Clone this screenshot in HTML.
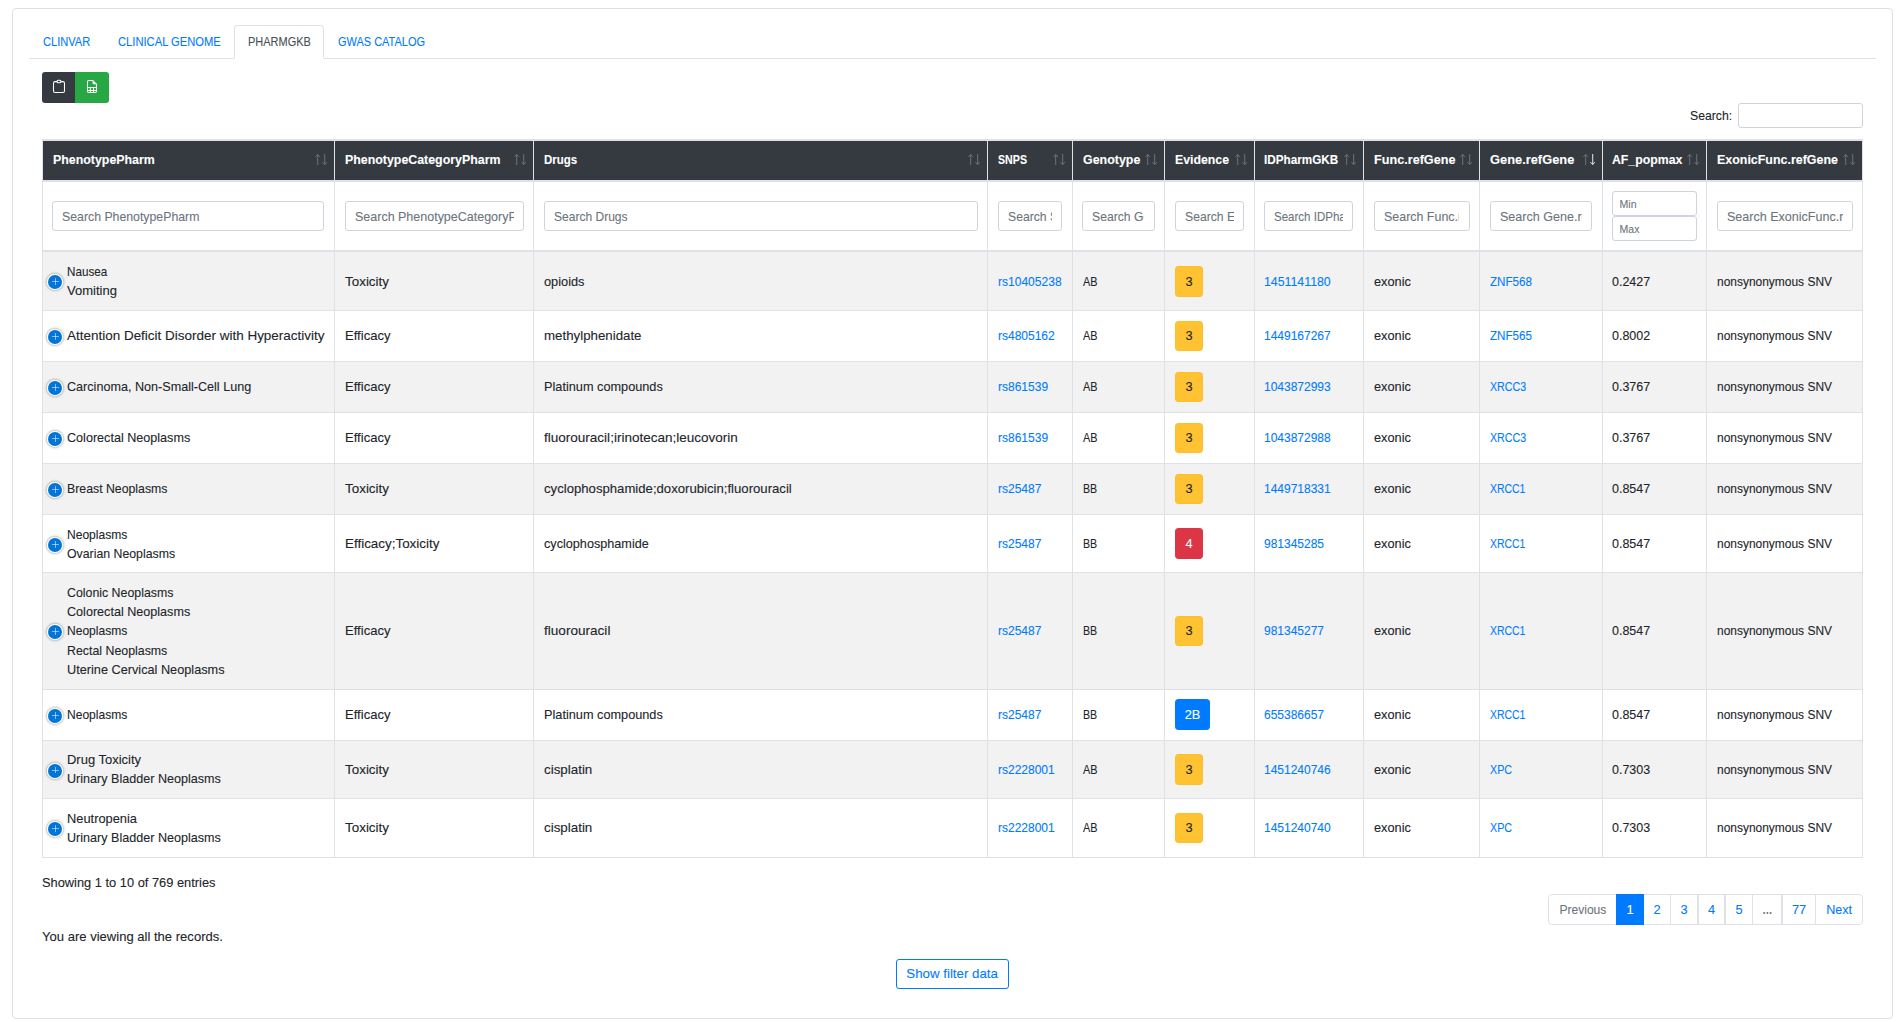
<!DOCTYPE html><html><head><meta charset="utf-8"><title>PharmGKB</title><style>
*{box-sizing:border-box}
html,body{margin:0;padding:0;background:#fff}
body{width:1896px;height:1022px;overflow:hidden;position:relative;font-family:"Liberation Sans",sans-serif;font-size:12.8px;line-height:19.2px;color:#212529;-webkit-text-stroke:.1px currentColor}
.card{position:absolute;left:12px;top:8px;width:1881px;height:1011px;border:1px solid #dfdfdf;border-radius:4px}
.tabline{position:absolute;left:29px;top:58px;width:1847px;height:1px;background:#dee2e6}
.tab-active{position:absolute;left:234px;top:25px;width:90px;height:34px;border:1px solid #dee2e6;border-bottom-color:#fff;border-radius:4px 4px 0 0;background:#fff}
.tab{position:absolute;top:32px;white-space:nowrap}
.btn-dark,.btn-green{position:absolute;top:72px;height:31px}
.btn-dark svg,.btn-green svg{display:block}
.btn-dark{left:42px;width:33px;background:#343a40;border-radius:3px 0 0 3px}
.btn-green{left:75px;width:34px;background:#28a745;border-radius:0 3px 3px 0}
.slabel{position:absolute;left:1690px;top:106px;white-space:nowrap}
.sinput{position:absolute;left:1738px;top:103px;width:125px;height:25px;border:1px solid #ced4da;border-radius:3px;background:#fff}
table.dt{position:absolute;left:42px;top:139px;width:1821px;table-layout:fixed;border-collapse:separate;border-spacing:0;border:1px solid #dee2e6;border-right:0}
.dt th,.dt td{border-right:1px solid #dee2e6;padding:0 9.6px;vertical-align:middle;text-align:left;white-space:nowrap;font-weight:400}
.dt .hr th{background:#343a40;color:#fff;height:42px;padding-bottom:2.4px;border-top:1px solid #dee2e6;border-bottom:2px solid #dee2e6;border-right-color:#dee2e6;font-weight:700;position:relative}
.dt .hr th:first-child{}
.arrows{position:absolute;right:7px;top:13.1px;display:flex;gap:.8px}
.ar{display:block}
.dt .fr th{height:70px;border-bottom:2px solid #dee2e6;background:#fff}
.inp{height:30px;border:1px solid #ced4da;border-radius:3px;padding:0 9px;color:#6c757d;overflow:hidden;display:flex;align-items:center;background:#fff}
.inp .clip{overflow:hidden;white-space:nowrap;width:100%;position:relative;top:.75px}
.inp.sm{height:24.6px;font-size:10.5px;padding:1.5px 6px 0 7px}
.mm{display:flex;flex-direction:column;gap:.4px;margin-right:-.6px;margin-left:-1px}
.dt tbody td{border-top:1px solid #dee2e6}
.dt tbody tr:first-child td{border-top:0}
.dt tr.odd td{background:#f2f2f2}
.dt td.c1{padding-left:24.2px;position:relative}
.plus{position:absolute;box-sizing:content-box;left:5px;top:50%;margin-top:-6px;width:14px;height:14px;border-radius:50%;background:#0275d8;box-shadow:0 0 0 1.3px #fff,0 0 2.6px 1.3px rgba(68,68,68,.7)}
.plus:before,.plus:after{content:"";position:absolute;background:rgba(255,255,255,.52)}
.plus:before{left:3.95px;top:6px;width:6.9px;height:1px}
.plus:after{left:6.9px;top:3.05px;width:1px;height:6.9px}
.lk{color:#007bff}
.dt td.ev{position:relative}
.badge{position:absolute;left:10px;text-align:center;border-radius:3.2px;border:1px solid transparent}
.bw{background:#ffc233;border-color:#ffbf26;color:#212529}
.bd{background:#dc3545;border-color:#dc3545;color:#fff}
.bp{background:#007bff;border-color:#007bff;color:#fff}
.dt tr.r1 td{padding-top:2px}
.dt tr.r1 td.c1{padding-top:0}
.info{position:absolute;left:42px;white-space:nowrap}
.pager{position:absolute;left:1548px;top:894px;height:31px}
.pl{position:absolute;top:0;height:31px;border:1px solid #dee2e6;background:#fff;text-align:center;line-height:29px}
.pl.act{background:#007bff;border-color:#007bff;z-index:2}
.pl.first{border-radius:4px 0 0 4px}
.pl.last{border-radius:0 4px 4px 0}
.sfd{position:absolute;left:896px;top:959px;width:113px;height:30px;border:1px solid #007bff;border-radius:3px;color:#007bff;text-align:center;line-height:28px;white-space:nowrap}

</style></head><body>
<div class="card"></div>
<div class="tabline"></div>
<div class="tab-active"></div>
<div class="tab" style="left:42.7px;color:#007bff"><span style="display:inline-block;transform:scaleX(0.8674);transform-origin:0 50%;">CLINVAR</span></div>
<div class="tab" style="left:117.5px;color:#007bff"><span style="display:inline-block;transform:scaleX(0.8743);transform-origin:0 50%;">CLINICAL GENOME</span></div>
<div class="tab" style="left:248px;color:#495057"><span style="display:inline-block;transform:scaleX(0.8587);transform-origin:0 50%;">PHARMGKB</span></div>
<div class="tab" style="left:338.4px;color:#007bff"><span style="display:inline-block;transform:scaleX(0.8577);transform-origin:0 50%;">GWAS CATALOG</span></div>
<div class="btn-dark"><svg width="33" height="31" viewBox="0 0 33 31"><rect x="11.5" y="9.6" width="11" height="10.9" rx="1.6" fill="none" stroke="#fff" stroke-width="1.05"/><rect x="15" y="8.3" width="4" height="2.4" rx="1.1" fill="#343a40" stroke="#fff" stroke-width="1.05"/></svg></div>
<div class="btn-green"><svg width="34" height="31" viewBox="0 0 34 31"><path d="M12.5 9.7a1.2 1.2 0 0 1 1.2-1.2H17.7L21.5 12.3V19.3a1.2 1.2 0 0 1-1.2 1.2H13.7a1.2 1.2 0 0 1-1.2-1.2z" fill="none" stroke="#fff" stroke-width="1.05"/><path d="M17.6 8.5V11.2a1.1 1.1 0 0 0 1.1 1.1H21.5z" fill="#fff"/><path d="M12.5 15.5H21.5M12.5 18.5H21.5M15.3 15.5V20.5M18.5 15.5V20.5" fill="none" stroke="#fff" stroke-width="1.05"/></svg></div>
<div class="slabel"><span style="display:inline-block;transform:scaleX(0.9567);transform-origin:0 50%;">Search:</span></div><div class="sinput"></div>
<table class="dt"><colgroup>
<col style="width:292px">
<col style="width:199px">
<col style="width:454px">
<col style="width:85px">
<col style="width:92px">
<col style="width:90px">
<col style="width:109px">
<col style="width:116px">
<col style="width:123px">
<col style="width:104px">
<col style="width:156px">
</colgroup><thead><tr class="hr">
<th><span style="display:inline-block;transform:scaleX(0.9672);transform-origin:0 50%;">PhenotypePharm</span><span class="arrows"><svg class="ar" style="opacity:.3" width="5.4" height="11" viewBox="0 0 5.4 11"><path d="M2.7 .4V11M.4 2.9L2.7 .5L5 2.9" fill="none" stroke="#fff" stroke-width=".95"/></svg><svg class="ar" style="opacity:.3" width="5.4" height="11" viewBox="0 0 5.4 11"><path d="M2.7 0V10.6M.4 8.1L2.7 10.5L5 8.1" fill="none" stroke="#fff" stroke-width=".95"/></svg></span></th>
<th><span style="display:inline-block;transform:scaleX(0.9675);transform-origin:0 50%;">PhenotypeCategoryPharm</span><span class="arrows"><svg class="ar" style="opacity:.3" width="5.4" height="11" viewBox="0 0 5.4 11"><path d="M2.7 .4V11M.4 2.9L2.7 .5L5 2.9" fill="none" stroke="#fff" stroke-width=".95"/></svg><svg class="ar" style="opacity:.3" width="5.4" height="11" viewBox="0 0 5.4 11"><path d="M2.7 0V10.6M.4 8.1L2.7 10.5L5 8.1" fill="none" stroke="#fff" stroke-width=".95"/></svg></span></th>
<th><span style="display:inline-block;transform:scaleX(0.8977);transform-origin:0 50%;">Drugs</span><span class="arrows"><svg class="ar" style="opacity:.3" width="5.4" height="11" viewBox="0 0 5.4 11"><path d="M2.7 .4V11M.4 2.9L2.7 .5L5 2.9" fill="none" stroke="#fff" stroke-width=".95"/></svg><svg class="ar" style="opacity:.3" width="5.4" height="11" viewBox="0 0 5.4 11"><path d="M2.7 0V10.6M.4 8.1L2.7 10.5L5 8.1" fill="none" stroke="#fff" stroke-width=".95"/></svg></span></th>
<th><span style="display:inline-block;transform:scaleX(0.8319);transform-origin:0 50%;">SNPS</span><span class="arrows"><svg class="ar" style="opacity:.3" width="5.4" height="11" viewBox="0 0 5.4 11"><path d="M2.7 .4V11M.4 2.9L2.7 .5L5 2.9" fill="none" stroke="#fff" stroke-width=".95"/></svg><svg class="ar" style="opacity:.3" width="5.4" height="11" viewBox="0 0 5.4 11"><path d="M2.7 0V10.6M.4 8.1L2.7 10.5L5 8.1" fill="none" stroke="#fff" stroke-width=".95"/></svg></span></th>
<th><span style="display:inline-block;transform:scaleX(0.9707);transform-origin:0 50%;">Genotype</span><span class="arrows"><svg class="ar" style="opacity:.3" width="5.4" height="11" viewBox="0 0 5.4 11"><path d="M2.7 .4V11M.4 2.9L2.7 .5L5 2.9" fill="none" stroke="#fff" stroke-width=".95"/></svg><svg class="ar" style="opacity:.3" width="5.4" height="11" viewBox="0 0 5.4 11"><path d="M2.7 0V10.6M.4 8.1L2.7 10.5L5 8.1" fill="none" stroke="#fff" stroke-width=".95"/></svg></span></th>
<th><span style="display:inline-block;transform:scaleX(0.9608);transform-origin:0 50%;">Evidence</span><span class="arrows"><svg class="ar" style="opacity:.3" width="5.4" height="11" viewBox="0 0 5.4 11"><path d="M2.7 .4V11M.4 2.9L2.7 .5L5 2.9" fill="none" stroke="#fff" stroke-width=".95"/></svg><svg class="ar" style="opacity:.3" width="5.4" height="11" viewBox="0 0 5.4 11"><path d="M2.7 0V10.6M.4 8.1L2.7 10.5L5 8.1" fill="none" stroke="#fff" stroke-width=".95"/></svg></span></th>
<th><span style="display:inline-block;transform:scaleX(0.9153);transform-origin:0 50%;position:relative;left:-1px;">IDPharmGKB</span><span class="arrows"><svg class="ar" style="opacity:.3" width="5.4" height="11" viewBox="0 0 5.4 11"><path d="M2.7 .4V11M.4 2.9L2.7 .5L5 2.9" fill="none" stroke="#fff" stroke-width=".95"/></svg><svg class="ar" style="opacity:.3" width="5.4" height="11" viewBox="0 0 5.4 11"><path d="M2.7 0V10.6M.4 8.1L2.7 10.5L5 8.1" fill="none" stroke="#fff" stroke-width=".95"/></svg></span></th>
<th><span style="display:inline-block;transform:scaleX(0.9879);transform-origin:0 50%;">Func.refGene</span><span class="arrows"><svg class="ar" style="opacity:.3" width="5.4" height="11" viewBox="0 0 5.4 11"><path d="M2.7 .4V11M.4 2.9L2.7 .5L5 2.9" fill="none" stroke="#fff" stroke-width=".95"/></svg><svg class="ar" style="opacity:.3" width="5.4" height="11" viewBox="0 0 5.4 11"><path d="M2.7 0V10.6M.4 8.1L2.7 10.5L5 8.1" fill="none" stroke="#fff" stroke-width=".95"/></svg></span></th>
<th><span style="display:inline-block;transform:scaleX(1.0043);transform-origin:0 50%;">Gene.refGene</span><span class="arrows"><svg class="ar" style="opacity:.3" width="5.4" height="11" viewBox="0 0 5.4 11"><path d="M2.7 .4V11M.4 2.9L2.7 .5L5 2.9" fill="none" stroke="#fff" stroke-width=".95"/></svg><svg class="ar" style="opacity:.92" width="5.4" height="11" viewBox="0 0 5.4 11"><path d="M2.7 0V10.6M.4 8.1L2.7 10.5L5 8.1" fill="none" stroke="#fff" stroke-width=".95"/></svg></span></th>
<th><span style="display:inline-block;transform:scaleX(0.9597);transform-origin:0 50%;position:relative;left:-1px;">AF_popmax</span><span class="arrows"><svg class="ar" style="opacity:.3" width="5.4" height="11" viewBox="0 0 5.4 11"><path d="M2.7 .4V11M.4 2.9L2.7 .5L5 2.9" fill="none" stroke="#fff" stroke-width=".95"/></svg><svg class="ar" style="opacity:.3" width="5.4" height="11" viewBox="0 0 5.4 11"><path d="M2.7 0V10.6M.4 8.1L2.7 10.5L5 8.1" fill="none" stroke="#fff" stroke-width=".95"/></svg></span></th>
<th><span style="display:inline-block;transform:scaleX(0.9715);transform-origin:0 50%;">ExonicFunc.refGene</span><span class="arrows"><svg class="ar" style="opacity:.3" width="5.4" height="11" viewBox="0 0 5.4 11"><path d="M2.7 .4V11M.4 2.9L2.7 .5L5 2.9" fill="none" stroke="#fff" stroke-width=".95"/></svg><svg class="ar" style="opacity:.3" width="5.4" height="11" viewBox="0 0 5.4 11"><path d="M2.7 0V10.6M.4 8.1L2.7 10.5L5 8.1" fill="none" stroke="#fff" stroke-width=".95"/></svg></span></th>
</tr><tr class="fr">
<th><div class="inp" style="margin-left:-.7px"><div class="clip"><span style="display:inline-block;transform:scaleX(0.961);transform-origin:0 50%">Search PhenotypePharm</span></div></div></th>
<th><div class="inp" style="margin-right:-.7px"><div class="clip"><span style="display:inline-block;transform:scaleX(0.976);transform-origin:0 50%">Search PhenotypeCategoryPharm</span></div></div></th>
<th><div class="inp" style="margin-right:-.7px"><div class="clip"><span style="display:inline-block;transform:scaleX(0.94);transform-origin:0 50%">Search Drugs</span></div></div></th>
<th><div class="inp"><div class="clip"><span style="display:inline-block;transform:scaleX(0.952);transform-origin:0 50%">Search SNPS</span></div></div></th>
<th><div class="inp" style="margin:0 -.7px;padding-right:10.4px"><div class="clip"><span style="display:inline-block;transform:scaleX(0.952);transform-origin:0 50%">Search Genotype</span></div></div></th>
<th><div class="inp"><div class="clip"><span style="display:inline-block;transform:scaleX(0.952);transform-origin:0 50%">Search Evidence</span></div></div></th>
<th><div class="inp" style="margin-left:-.7px"><div class="clip"><span style="display:inline-block;transform:scaleX(0.9);transform-origin:0 50%">Search IDPharmGKB</span></div></div></th>
<th><div class="inp" style="margin-right:-.7px;padding-right:9.7px"><div class="clip"><span style="display:inline-block;transform:scaleX(0.972);transform-origin:0 50%">Search Func.refGene</span></div></div></th>
<th><div class="inp"><div class="clip"><span style="display:inline-block;transform:scaleX(0.98);transform-origin:0 50%">Search Gene.refGene</span></div></div></th>
<th><div class="mm"><div class="inp sm"><span>Min</span></div><div class="inp sm"><span>Max</span></div></div></th>
<th><div class="inp" style="margin-right:-.7px"><div class="clip"><span style="display:inline-block;transform:scaleX(0.98);transform-origin:0 50%">Search ExonicFunc.refGene</span></div></div></th>
</tr></thead><tbody>
<tr class="odd r1" style="height:58px">
<td class="c1"><i class="plus" style="margin-top:-5.6px"></i><span style="display:inline-block;transform:scaleX(0.9114);transform-origin:0 50%;">Nausea</span><br><span style="display:inline-block;transform:scaleX(1.0164);transform-origin:0 50%;">Vomiting</span></td>
<td><span style="display:inline-block;transform:scaleX(1.0488);transform-origin:0 50%;">Toxicity</span></td>
<td><span style="display:inline-block;transform:scaleX(0.9985);transform-origin:0 50%;">opioids</span></td>
<td><span class="lk" style="display:inline-block;transform:scaleX(0.9407);transform-origin:0 50%;">rs10405238</span></td>
<td><span style="display:inline-block;transform:scaleX(0.8490);transform-origin:0 50%;">AB</span></td>
<td class="ev"><span class="badge bw" style="top:14px;height:31px;line-height:29px;width:28px">3</span></td>
<td><span class="lk" style="display:inline-block;transform:scaleX(0.9627);transform-origin:0 50%;position:relative;left:-1px;">1451141180</span></td>
<td><span style="display:inline-block;transform:scaleX(0.9973);transform-origin:0 50%;">exonic</span></td>
<td><span class="lk" style="display:inline-block;transform:scaleX(0.9084);transform-origin:0 50%;">ZNF568</span></td>
<td><span style="display:inline-block;transform:scaleX(0.9760);transform-origin:0 50%;position:relative;left:-1px;">0.2427</span></td>
<td><span style="display:inline-block;transform:scaleX(0.9345);transform-origin:0 50%;">nonsynonymous SNV</span></td>
</tr>
<tr class="even" style="height:51px">
<td class="c1"><i class="plus"></i><span style="display:inline-block;transform:scaleX(1.0525);transform-origin:0 50%;">Attention Deficit Disorder with Hyperactivity</span></td>
<td><span style="display:inline-block;transform:scaleX(1.0207);transform-origin:0 50%;">Efficacy</span></td>
<td><span style="display:inline-block;transform:scaleX(1.0381);transform-origin:0 50%;">methylphenidate</span></td>
<td><span class="lk" style="display:inline-block;transform:scaleX(0.9374);transform-origin:0 50%;">rs4805162</span></td>
<td><span style="display:inline-block;transform:scaleX(0.8490);transform-origin:0 50%;">AB</span></td>
<td class="ev"><span class="badge bw" style="top:10px;height:30px;line-height:28px;width:28px">3</span></td>
<td><span class="lk" style="display:inline-block;transform:scaleX(0.9372);transform-origin:0 50%;position:relative;left:-1px;">1449167267</span></td>
<td><span style="display:inline-block;transform:scaleX(0.9973);transform-origin:0 50%;">exonic</span></td>
<td><span class="lk" style="display:inline-block;transform:scaleX(0.9084);transform-origin:0 50%;">ZNF565</span></td>
<td><span style="display:inline-block;transform:scaleX(0.9760);transform-origin:0 50%;position:relative;left:-1px;">0.8002</span></td>
<td><span style="display:inline-block;transform:scaleX(0.9345);transform-origin:0 50%;">nonsynonymous SNV</span></td>
</tr>
<tr class="odd" style="height:51px">
<td class="c1"><i class="plus"></i><span style="display:inline-block;transform:scaleX(0.9847);transform-origin:0 50%;">Carcinoma, Non-Small-Cell Lung</span></td>
<td><span style="display:inline-block;transform:scaleX(1.0207);transform-origin:0 50%;">Efficacy</span></td>
<td><span style="display:inline-block;transform:scaleX(0.9940);transform-origin:0 50%;">Platinum compounds</span></td>
<td><span class="lk" style="display:inline-block;transform:scaleX(0.9386);transform-origin:0 50%;">rs861539</span></td>
<td><span style="display:inline-block;transform:scaleX(0.8490);transform-origin:0 50%;">AB</span></td>
<td class="ev"><span class="badge bw" style="top:10px;height:30px;line-height:28px;width:28px">3</span></td>
<td><span class="lk" style="display:inline-block;transform:scaleX(0.9372);transform-origin:0 50%;position:relative;left:-1px;">1043872993</span></td>
<td><span style="display:inline-block;transform:scaleX(0.9973);transform-origin:0 50%;">exonic</span></td>
<td><span class="lk" style="display:inline-block;transform:scaleX(0.8320);transform-origin:0 50%;">XRCC3</span></td>
<td><span style="display:inline-block;transform:scaleX(0.9760);transform-origin:0 50%;position:relative;left:-1px;">0.3767</span></td>
<td><span style="display:inline-block;transform:scaleX(0.9345);transform-origin:0 50%;">nonsynonymous SNV</span></td>
</tr>
<tr class="even" style="height:51px">
<td class="c1"><i class="plus"></i><span style="display:inline-block;transform:scaleX(0.9841);transform-origin:0 50%;">Colorectal Neoplasms</span></td>
<td><span style="display:inline-block;transform:scaleX(1.0207);transform-origin:0 50%;">Efficacy</span></td>
<td><span style="display:inline-block;transform:scaleX(1.0565);transform-origin:0 50%;">fluorouracil;irinotecan;leucovorin</span></td>
<td><span class="lk" style="display:inline-block;transform:scaleX(0.9386);transform-origin:0 50%;">rs861539</span></td>
<td><span style="display:inline-block;transform:scaleX(0.8490);transform-origin:0 50%;">AB</span></td>
<td class="ev"><span class="badge bw" style="top:10px;height:30px;line-height:28px;width:28px">3</span></td>
<td><span class="lk" style="display:inline-block;transform:scaleX(0.9372);transform-origin:0 50%;position:relative;left:-1px;">1043872988</span></td>
<td><span style="display:inline-block;transform:scaleX(0.9973);transform-origin:0 50%;">exonic</span></td>
<td><span class="lk" style="display:inline-block;transform:scaleX(0.8320);transform-origin:0 50%;">XRCC3</span></td>
<td><span style="display:inline-block;transform:scaleX(0.9760);transform-origin:0 50%;position:relative;left:-1px;">0.3767</span></td>
<td><span style="display:inline-block;transform:scaleX(0.9345);transform-origin:0 50%;">nonsynonymous SNV</span></td>
</tr>
<tr class="odd" style="height:51px">
<td class="c1"><i class="plus"></i><span style="display:inline-block;transform:scaleX(0.9611);transform-origin:0 50%;">Breast Neoplasms</span></td>
<td><span style="display:inline-block;transform:scaleX(1.0488);transform-origin:0 50%;">Toxicity</span></td>
<td><span style="display:inline-block;transform:scaleX(1.0275);transform-origin:0 50%;">cyclophosphamide;doxorubicin;fluorouracil</span></td>
<td><span class="lk" style="display:inline-block;transform:scaleX(0.9362);transform-origin:0 50%;">rs25487</span></td>
<td><span style="display:inline-block;transform:scaleX(0.8315);transform-origin:0 50%;">BB</span></td>
<td class="ev"><span class="badge bw" style="top:10px;height:30px;line-height:28px;width:28px">3</span></td>
<td><span class="lk" style="display:inline-block;transform:scaleX(0.9372);transform-origin:0 50%;position:relative;left:-1px;">1449718331</span></td>
<td><span style="display:inline-block;transform:scaleX(0.9973);transform-origin:0 50%;">exonic</span></td>
<td><span class="lk" style="display:inline-block;transform:scaleX(0.8158);transform-origin:0 50%;">XRCC1</span></td>
<td><span style="display:inline-block;transform:scaleX(0.9760);transform-origin:0 50%;position:relative;left:-1px;">0.8547</span></td>
<td><span style="display:inline-block;transform:scaleX(0.9345);transform-origin:0 50%;">nonsynonymous SNV</span></td>
</tr>
<tr class="even" style="height:58px">
<td class="c1"><i class="plus" style="margin-top:-5.6px"></i><span style="display:inline-block;transform:scaleX(0.9420);transform-origin:0 50%;position:relative;top:1px;">Neoplasms</span><br><span style="display:inline-block;transform:scaleX(0.9620);transform-origin:0 50%;">Ovarian Neoplasms</span></td>
<td><span style="display:inline-block;transform:scaleX(1.0480);transform-origin:0 50%;">Efficacy;Toxicity</span></td>
<td><span style="display:inline-block;transform:scaleX(0.9887);transform-origin:0 50%;">cyclophosphamide</span></td>
<td><span class="lk" style="display:inline-block;transform:scaleX(0.9362);transform-origin:0 50%;">rs25487</span></td>
<td><span style="display:inline-block;transform:scaleX(0.8315);transform-origin:0 50%;">BB</span></td>
<td class="ev"><span class="badge bd" style="top:13px;height:31px;line-height:29px;width:28px">4</span></td>
<td><span class="lk" style="display:inline-block;transform:scaleX(0.9366);transform-origin:0 50%;position:relative;left:-1px;">981345285</span></td>
<td><span style="display:inline-block;transform:scaleX(0.9973);transform-origin:0 50%;">exonic</span></td>
<td><span class="lk" style="display:inline-block;transform:scaleX(0.8158);transform-origin:0 50%;">XRCC1</span></td>
<td><span style="display:inline-block;transform:scaleX(0.9760);transform-origin:0 50%;position:relative;left:-1px;">0.8547</span></td>
<td><span style="display:inline-block;transform:scaleX(0.9345);transform-origin:0 50%;">nonsynonymous SNV</span></td>
</tr>
<tr class="odd" style="height:117px">
<td class="c1"><i class="plus"></i><span style="display:inline-block;transform:scaleX(0.9651);transform-origin:0 50%;">Colonic Neoplasms</span><br><span style="display:inline-block;transform:scaleX(0.9841);transform-origin:0 50%;">Colorectal Neoplasms</span><br><span style="display:inline-block;transform:scaleX(0.9420);transform-origin:0 50%;">Neoplasms</span><br><span style="display:inline-block;transform:scaleX(0.9659);transform-origin:0 50%;">Rectal Neoplasms</span><br><span style="display:inline-block;transform:scaleX(0.9931);transform-origin:0 50%;">Uterine Cervical Neoplasms</span></td>
<td><span style="display:inline-block;transform:scaleX(1.0207);transform-origin:0 50%;">Efficacy</span></td>
<td><span style="display:inline-block;transform:scaleX(1.0608);transform-origin:0 50%;">fluorouracil</span></td>
<td><span class="lk" style="display:inline-block;transform:scaleX(0.9362);transform-origin:0 50%;">rs25487</span></td>
<td><span style="display:inline-block;transform:scaleX(0.8315);transform-origin:0 50%;">BB</span></td>
<td class="ev"><span class="badge bw" style="top:43px;height:30px;line-height:28px;width:28px">3</span></td>
<td><span class="lk" style="display:inline-block;transform:scaleX(0.9366);transform-origin:0 50%;position:relative;left:-1px;">981345277</span></td>
<td><span style="display:inline-block;transform:scaleX(0.9973);transform-origin:0 50%;">exonic</span></td>
<td><span class="lk" style="display:inline-block;transform:scaleX(0.8158);transform-origin:0 50%;">XRCC1</span></td>
<td><span style="display:inline-block;transform:scaleX(0.9760);transform-origin:0 50%;position:relative;left:-1px;">0.8547</span></td>
<td><span style="display:inline-block;transform:scaleX(0.9345);transform-origin:0 50%;">nonsynonymous SNV</span></td>
</tr>
<tr class="even" style="height:51px">
<td class="c1"><i class="plus"></i><span style="display:inline-block;transform:scaleX(0.9420);transform-origin:0 50%;">Neoplasms</span></td>
<td><span style="display:inline-block;transform:scaleX(1.0207);transform-origin:0 50%;">Efficacy</span></td>
<td><span style="display:inline-block;transform:scaleX(0.9940);transform-origin:0 50%;">Platinum compounds</span></td>
<td><span class="lk" style="display:inline-block;transform:scaleX(0.9362);transform-origin:0 50%;">rs25487</span></td>
<td><span style="display:inline-block;transform:scaleX(0.8315);transform-origin:0 50%;">BB</span></td>
<td class="ev"><span class="badge bp" style="top:9px;height:31px;line-height:29px;width:35px">2B</span></td>
<td><span class="lk" style="display:inline-block;transform:scaleX(0.9366);transform-origin:0 50%;position:relative;left:-1px;">655386657</span></td>
<td><span style="display:inline-block;transform:scaleX(0.9973);transform-origin:0 50%;">exonic</span></td>
<td><span class="lk" style="display:inline-block;transform:scaleX(0.8158);transform-origin:0 50%;">XRCC1</span></td>
<td><span style="display:inline-block;transform:scaleX(0.9760);transform-origin:0 50%;position:relative;left:-1px;">0.8547</span></td>
<td><span style="display:inline-block;transform:scaleX(0.9345);transform-origin:0 50%;">nonsynonymous SNV</span></td>
</tr>
<tr class="odd" style="height:58px">
<td class="c1"><i class="plus"></i><span style="display:inline-block;transform:scaleX(1.0135);transform-origin:0 50%;">Drug Toxicity</span><br><span style="display:inline-block;transform:scaleX(0.9836);transform-origin:0 50%;position:relative;top:-1px;">Urinary Bladder Neoplasms</span></td>
<td><span style="display:inline-block;transform:scaleX(1.0488);transform-origin:0 50%;">Toxicity</span></td>
<td><span style="display:inline-block;transform:scaleX(1.0447);transform-origin:0 50%;">cisplatin</span></td>
<td><span class="lk" style="display:inline-block;transform:scaleX(0.9374);transform-origin:0 50%;">rs2228001</span></td>
<td><span style="display:inline-block;transform:scaleX(0.8490);transform-origin:0 50%;">AB</span></td>
<td class="ev"><span class="badge bw" style="top:13px;height:31px;line-height:29px;width:28px">3</span></td>
<td><span class="lk" style="display:inline-block;transform:scaleX(0.9372);transform-origin:0 50%;position:relative;left:-1px;">1451240746</span></td>
<td><span style="display:inline-block;transform:scaleX(0.9973);transform-origin:0 50%;">exonic</span></td>
<td><span class="lk" style="display:inline-block;transform:scaleX(0.8361);transform-origin:0 50%;">XPC</span></td>
<td><span style="display:inline-block;transform:scaleX(0.9760);transform-origin:0 50%;position:relative;left:-1px;">0.7303</span></td>
<td><span style="display:inline-block;transform:scaleX(0.9345);transform-origin:0 50%;">nonsynonymous SNV</span></td>
</tr>
<tr class="even" style="height:59px">
<td class="c1"><i class="plus"></i><span style="display:inline-block;transform:scaleX(1.0038);transform-origin:0 50%;">Neutropenia</span><br><span style="display:inline-block;transform:scaleX(0.9836);transform-origin:0 50%;">Urinary Bladder Neoplasms</span></td>
<td><span style="display:inline-block;transform:scaleX(1.0488);transform-origin:0 50%;">Toxicity</span></td>
<td><span style="display:inline-block;transform:scaleX(1.0447);transform-origin:0 50%;">cisplatin</span></td>
<td><span class="lk" style="display:inline-block;transform:scaleX(0.9374);transform-origin:0 50%;">rs2228001</span></td>
<td><span style="display:inline-block;transform:scaleX(0.8490);transform-origin:0 50%;">AB</span></td>
<td class="ev"><span class="badge bw" style="top:14px;height:30px;line-height:28px;width:28px">3</span></td>
<td><span class="lk" style="display:inline-block;transform:scaleX(0.9372);transform-origin:0 50%;position:relative;left:-1px;">1451240740</span></td>
<td><span style="display:inline-block;transform:scaleX(0.9973);transform-origin:0 50%;">exonic</span></td>
<td><span class="lk" style="display:inline-block;transform:scaleX(0.8361);transform-origin:0 50%;">XPC</span></td>
<td><span style="display:inline-block;transform:scaleX(0.9760);transform-origin:0 50%;position:relative;left:-1px;">0.7303</span></td>
<td><span style="display:inline-block;transform:scaleX(0.9345);transform-origin:0 50%;">nonsynonymous SNV</span></td>
</tr>
</tbody></table>
<div class="info" style="top:873px"><span style="display:inline-block;transform:scaleX(1.0035);transform-origin:0 50%;">Showing 1 to 10 of 769 entries</span></div>
<div class="info" style="top:927px"><span style="display:inline-block;transform:scaleX(1.0199);transform-origin:0 50%;">You are viewing all the records.</span></div>
<div class="pager">
<div class="pl first" style="left:0px;width:69px;color:#6c757d"><span style="display:inline-block;transform:scaleX(0.9418);transform-origin:50% 50%;">Previous</span></div>
<div class="pl act" style="left:68px;width:28px;color:#fff"><span>1</span></div>
<div class="pl" style="left:95px;width:28px;color:#007bff"><span>2</span></div>
<div class="pl" style="left:122px;width:28px;color:#007bff"><span>3</span></div>
<div class="pl" style="left:150px;width:27px;color:#007bff"><span>4</span></div>
<div class="pl" style="left:177px;width:28px;color:#007bff"><span>5</span></div>
<div class="pl" style="left:204px;width:30px;color:#6c757d"><span style="display:inline-block;transform:scaleX(0.7971);transform-origin:50% 50%;font-weight:700;">…</span></div>
<div class="pl" style="left:234px;width:34px;color:#007bff"><span>77</span></div>
<div class="pl last" style="left:267px;width:48px;color:#007bff"><span style="display:inline-block;transform:scaleX(0.9843);transform-origin:50% 50%;">Next</span></div>
</div>
<div class="sfd"><span style="display:inline-block;transform:scaleX(1.0372);transform-origin:50% 50%;">Show filter data</span></div>
</body></html>
